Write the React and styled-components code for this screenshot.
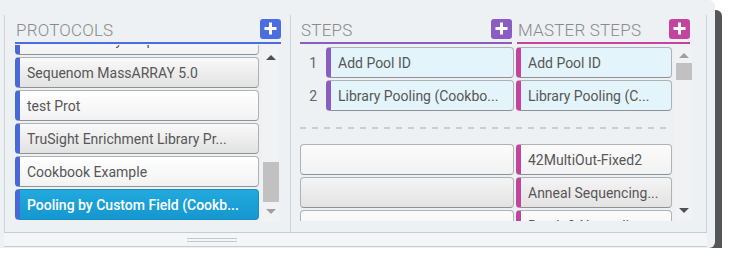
import React from "react";
import styled, { createGlobalStyle, css } from "styled-components";

const GlobalStyle = createGlobalStyle`
  html, body { margin: 0; padding: 0; background: #ffffff; }
  body { font-family: Roboto, "Liberation Sans", sans-serif; }
  * { box-sizing: border-box; }
`;

const Frame = styled.div`
  width: 715px;
  height: 248px;
  background: #eef1f3;
  border-radius: 0 6px 6px 0;
  box-shadow: 7px 10px 0 0 #565656;
  padding: 15px 8px 0 4px;
  display: flex;
  flex-direction: column;
`;

const Panels = styled.div`
  height: 218px;
  display: flex;
  border-left: 1px solid #cdd4d8;
  border-right: 1px solid #cdd4d8;
  border-bottom: 1px solid #c6cdd1;
`;

const Splitter = styled.div`
  height: 14px;
  border-bottom: 1px solid #c6cdd1;
  background: #f4f5f6;
  display: flex;
  align-items: center;
  padding-left: 183px;
`;

const Grip = styled.div`
  width: 50px;
  height: 4px;
  border-top: 1px solid #c3c8cc;
  border-bottom: 1px solid #c3c8cc;
`;

const LeftPanel = styled.div`
  width: 286px;
  border-right: 1px solid #cdd4d8;
  padding-left: 10px;
  display: flex;
  flex-direction: column;
`;

const RightPanel = styled.div`
  flex: 1;
  padding-left: 9px;
  display: flex;
  flex-direction: column;
`;

const Header = styled.div`
  width: ${(p) => p.$w}px;
  height: 29px;
  display: flex;
  align-items: center;
  justify-content: space-between;
  border-bottom: 2px solid ${(p) => p.$color};
  padding-top: 2px;
`;

const Title = styled.span`
  font-size: 17px;
  font-weight: 300;
  color: #8a8a8a;
  letter-spacing: 0.2px;
  padding-left: 1px;
`;

const AddButton = styled.button`
  width: 21px;
  height: 20px;
  border: none;
  border-radius: 3px;
  padding: 0;
  background: ${(p) => p.$color};
  display: flex;
  align-items: center;
  justify-content: center;
  margin-bottom: 2px;
`;

const HeaderRow = styled.div`
  display: flex;
  gap: 5px;
`;

const Plus = () => (
  <svg width="13" height="13" viewBox="0 0 13 13">
    <rect x="5" y="0.5" width="3" height="12" fill="#fff" />
    <rect x="0.5" y="5" width="12" height="3" fill="#fff" />
  </svg>
);

const ListArea = styled.div`
  display: flex;
  height: 177px;
  margin-top: 1px;
  overflow: hidden;
`;

const ListClip = styled.div`
  width: 244px;
  overflow: hidden;
`;

const ListInner = styled.div`
  margin-top: ${(p) => p.$offset || 0}px;
  display: flex;
  flex-direction: column;
  gap: 2px;
`;

const itemBase = css`
  height: 31px;
  border: 1px solid #aeb2b5;
  border-bottom-color: #8e9295;
  border-radius: 4px;
  font-size: 14px;
  display: flex;
  align-items: center;
  white-space: nowrap;
  overflow: hidden;
  flex-shrink: 0;
`;

const ProtocolItem = styled.div`
  ${itemBase};
  border-left: 5px solid #4a69d8;
  padding-left: 7px;
  color: ${(p) => (p.$selected ? "#ffffff" : "#575757")};
  font-weight: ${(p) => (p.$selected ? 500 : 400)};
  background: ${(p) =>
    p.$selected
      ? "linear-gradient(#22a9de, #1597cf)"
      : p.$shade
      ? "linear-gradient(#f9f9f9, #e2e2e2)"
      : "linear-gradient(#ffffff, #f2f2f2)"};
  border-color: ${(p) => (p.$selected ? "#1a8cc0" : undefined)};
  border-left-color: #4a69d8;
`;

const ScrollBar = styled.div`
  width: 17px;
  margin-left: ${(p) => p.$ml}px;
  display: flex;
  flex-direction: column;
  align-items: center;
  background: #f1f2f3;
`;

const Arrow = styled.div`
  width: 0;
  height: 0;
  border-left: 5px solid transparent;
  border-right: 5px solid transparent;
  ${(p) =>
    p.$down
      ? css`border-top: 5px solid ${p.$c};`
      : css`border-bottom: 5px solid ${p.$c};`}
  margin: ${(p) => p.$m};
`;

const Thumb = styled.div`
  width: 16px;
  height: ${(p) => p.$h}px;
  background: #c1c1c1;
  margin-top: ${(p) => p.$top}px;
`;

const Spacer = styled.div`
  flex: 1;
`;

const StepsBody = styled.div`
  display: flex;
  height: 174px;
  margin-top: 3px;
  overflow: hidden;
`;

const StepsContent = styled.div`
  width: 372px;
  display: flex;
  flex-direction: column;
  gap: 2px;
`;

const Row = styled.div`
  display: flex;
  gap: 2px;
  flex-shrink: 0;
`;

const Num = styled.div`
  width: 24px;
  height: 31px;
  font-size: 14px;
  color: #666;
  display: flex;
  align-items: center;
  justify-content: flex-end;
  padding-right: 7px;
`;

const StepBox = styled.div`
  ${itemBase};
  width: ${(p) => p.$w}px;
  padding-left: 7px;
  color: #575757;
  border-left: ${(p) => (p.$bar ? `5px solid ${p.$bar}` : "1px solid #aeb2b5")};
  background: ${(p) =>
    p.$tint
      ? "#e3f4fb"
      : p.$shade
      ? "linear-gradient(#f4f4f4, #e3e3e3)"
      : "linear-gradient(#fbfbfb, #f2f2f2)"};
`;

const Dashed = styled.div`
  height: 2px;
  margin: 14px 0 13px;
  background: repeating-linear-gradient(90deg, #c9ced2 0 6px, transparent 6px 12px);
  flex-shrink: 0;
`;

const protocols = [
  { name: "Illumina Library Prep", shade: false },
  { name: "Sequenom MassARRAY 5.0", shade: true },
  { name: "test Prot", shade: false },
  { name: "TruSight Enrichment Library Pr...", shade: true },
  { name: "Cookbook Example", shade: false },
  { name: "Pooling by Custom Field (Cookb...", selected: true },
];

const steps = ["Add Pool ID", "Library Pooling (Cookbo..."];
const masterSteps = ["Add Pool ID", "Library Pooling (C..."];
const available = ["42MultiOut-Fixed2", "Anneal Sequencing...", "Batch & Normaliz..."];

const BLUE = "#4a6ee0";
const PURPLE = "#8b5cc2";
const MAGENTA = "#c2449e";

export default function App() {
  return (
    <>
      <GlobalStyle />
      <Frame>
        <Panels>
          <LeftPanel>
            <Header $w={266} $color={BLUE}>
              <Title>PROTOCOLS</Title>
              <AddButton $color={BLUE}>
                <Plus />
              </AddButton>
            </Header>
            <ListArea>
              <ListClip>
                <ListInner $offset={-21}>
                  {protocols.map((p, i) => (
                    <ProtocolItem key={i} $shade={p.shade} $selected={p.selected}>
                      {p.name}
                    </ProtocolItem>
                  ))}
                </ListInner>
              </ListClip>
              <ScrollBar $ml={3}>
                <Arrow $c="#505050" $m="10px 0 0" />
                <Spacer />
                <Thumb $h={40} $top={0} />
                <Arrow $down $c="#a0a0a0" $m="7px 0 8px" />
              </ScrollBar>
            </ListArea>
          </LeftPanel>
          <RightPanel>
            <HeaderRow>
              <Header $w={212} $color={PURPLE}>
                <Title>STEPS</Title>
                <AddButton $color={PURPLE}>
                  <Plus />
                </AddButton>
              </Header>
              <Header $w={173} $color={MAGENTA}>
                <Title>MASTER STEPS</Title>
                <AddButton $color={MAGENTA}>
                  <Plus />
                </AddButton>
              </Header>
            </HeaderRow>
            <StepsBody>
              <StepsContent>
                {steps.map((s, i) => (
                  <Row key={s}>
                    <Num>{i + 1}</Num>
                    <StepBox $w={188} $tint $bar={PURPLE}>
                      {s}
                    </StepBox>
                    <StepBox $w={156} $tint $bar={MAGENTA}>
                      {masterSteps[i]}
                    </StepBox>
                  </Row>
                ))}
                <Dashed />
                {available.map((s, i) => (
                  <Row key={s}>
                    <StepBox $w={214} $shade={i % 2 === 1} />
                    <StepBox $w={156} $shade={i % 2 === 1} $bar={MAGENTA}>
                      {s}
                    </StepBox>
                  </Row>
                ))}
              </StepsContent>
              <ScrollBar $ml={3}>
                <Arrow $c="#a0a0a0" $m="6px 0 0" />
                <Thumb $h={17} $top={5} />
                <Spacer />
                <Arrow $down $c="#505050" $m="0 0 8px" />
              </ScrollBar>
            </StepsBody>
          </RightPanel>
        </Panels>
        <Splitter>
          <Grip />
        </Splitter>
      </Frame>
    </>
  );
}
